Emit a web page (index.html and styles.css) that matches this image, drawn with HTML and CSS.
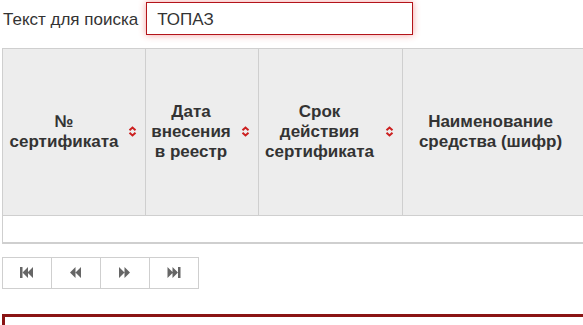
FILE: index.html
```html
<!DOCTYPE html>
<html lang="ru">
<head>
    <meta charset="UTF-8">
    <title>Реестр сертификатов</title>
    <link rel="stylesheet" href="styles.css">
</head>
<body>

<div class="search">
    <label for="q">Текст для поиска</label>
    <input id="q" type="text" value="ТОПАЗ">
</div>

<table class="registry">
    <thead>
        <tr>
            <th class="c1">№<br>сертификата<span class="sort"><svg width="9" height="11" viewBox="0 0 9 11"><path d="M1.5 4.2 L4.5 1.5 L7.5 4.2 M1.5 6.8 L4.5 9.5 L7.5 6.8" fill="none" stroke="#cc1f1f" stroke-width="2"/></svg></span></th>
            <th class="c2">Дата<br>внесения<br>в реестр<span class="sort"><svg width="9" height="11" viewBox="0 0 9 11"><path d="M1.5 4.2 L4.5 1.5 L7.5 4.2 M1.5 6.8 L4.5 9.5 L7.5 6.8" fill="none" stroke="#cc1f1f" stroke-width="2"/></svg></span></th>
            <th class="c3">Срок<br>действия<br>сертификата<span class="sort"><svg width="9" height="11" viewBox="0 0 9 11"><path d="M1.5 4.2 L4.5 1.5 L7.5 4.2 M1.5 6.8 L4.5 9.5 L7.5 6.8" fill="none" stroke="#cc1f1f" stroke-width="2"/></svg></span></th>
            <th class="c4">Наименование<br>средства (шифр)</th>
        </tr>
    </thead>
    <tbody>
        <tr><td colspan="4"></td></tr>
    </tbody>
</table>

<!-- Pager -->
<div class="pager">
    <button><svg width="14" height="11" viewBox="0 0 14 11"><rect x="0" y="0" width="2.5" height="11" fill="#666"/><path d="M2.5 5.5 L8 0 V11 Z M7.5 5.5 L13 0 V11 Z" fill="#666"/></svg></button>
    <button><svg width="12" height="11" viewBox="0 0 12 11"><path d="M0 5.5 L5.5 0 V11 Z M5.5 5.5 L11 0 V11 Z" fill="#666"/></svg></button>
    <button><svg width="12" height="11" viewBox="0 0 12 11"><path d="M11 5.5 L5.5 0 V11 Z M5.5 5.5 L0 0 V11 Z" fill="#666"/></svg></button>
    <button><svg width="14" height="11" viewBox="0 0 14 11"><path d="M11 5.5 L5.5 0 V11 Z M6 5.5 L0.5 0 V11 Z" fill="#666"/><rect x="11" y="0" width="2.5" height="11" fill="#666"/></svg></button>
</div>

<div class="result"></div>

</body>
</html>
```

FILE: styles.css
```css
* {
    box-sizing: border-box;
}

html, body {
    margin: 0;
    padding: 0;
    overflow: hidden;
}

body {
    width: 800px;
    font-family: "Liberation Sans", Arial, sans-serif;
    font-size: 17px;
    color: #333;
    background: #fff;
}

.search {
    display: flex;
    align-items: center;
    padding: 2px 0 0 3px;
}

.search label {
    margin-right: 8px;
    padding-top: 3px;
}

.search input {
    width: 267px;
    height: 33px;
    padding: 2px 10px 0;
    border: 1px solid #b3141a;
    box-shadow: 0 0 7px rgba(230, 40, 40, 0.45);
    font-family: inherit;
    font-size: 17px;
    color: #333;
    outline: none;
}

.registry {
    margin: 13px 0 0 2px;
    border-collapse: collapse;
    table-layout: fixed;
}

.registry th {
    position: relative;
    height: 167px;
    padding: 0 25px 0 5px;
    background: #ededed;
    border: 1px solid #cfcfcf;
    font-weight: bold;
    font-size: 17px;
    line-height: 20px;
    text-align: center;
    vertical-align: middle;
}

.registry .c1 { width: 143px; }
.registry .c2 { width: 113px; padding-left: 3px; }
.registry .c3 { width: 144px; padding-left: 3px; }
.registry .c4 { width: 204px; padding-right: 33px; }

.sort {
    position: absolute;
    right: 8px;
    top: 50%;
    margin-top: -6px;
    line-height: 0;
}

.registry td {
    height: 27px;
    border: 1px solid #cfcfcf;
    border-bottom: 2px solid #cfcfcf;
    background: #fff;
}

.pager {
    display: inline-flex;
    margin: 13px 0 0 2px;
    border: 1px solid #cfcfcf;
}

.pager button {
    width: 49px;
    height: 30px;
    padding: 0;
    border: none;
    border-left: 1px solid #cfcfcf;
    background: #fff;
    display: flex;
    align-items: center;
    justify-content: center;
}

.pager button:first-child {
    width: 48px;
    border-left: none;
}

.result {
    margin: 25px 0 0 2px;
    height: 40px;
    border: 3px solid #8a1414;
}
```
